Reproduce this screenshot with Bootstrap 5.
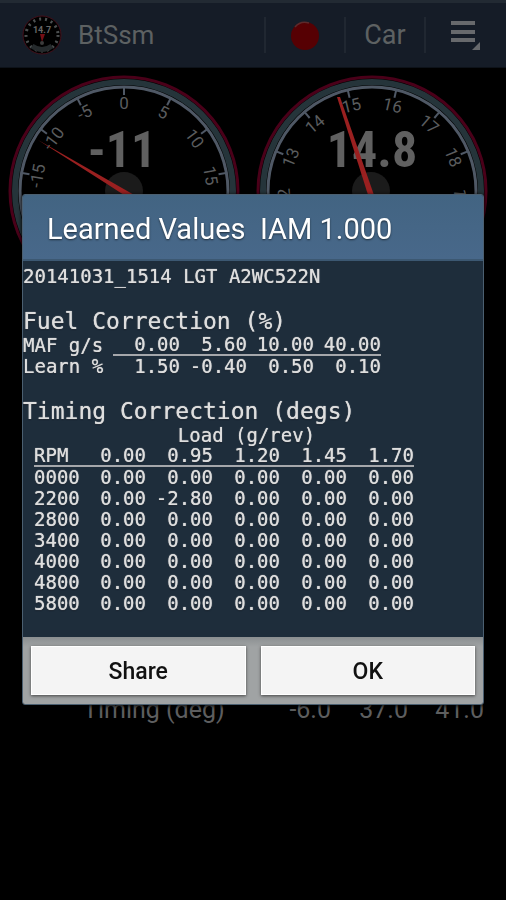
<!DOCTYPE html>
<html lang="en">
<head>
<meta charset="utf-8">
<meta name="viewport" content="width=device-width, initial-scale=1">
<title>BtSsm</title>
<link href="https://cdn.jsdelivr.net/npm/bootstrap@5.3.0/dist/css/bootstrap.min.css" rel="stylesheet">
<style>
body { background: #000; font-family: Roboto, sans-serif; color: #5d5e5f; }
.app-bar { height: 68px; background: #151c27; border-top: 3px solid #222a33; border-bottom: 1px solid #0d1219; padding: 0 2px 0 22px; }
.app-bar .app-name { font-size: 26px; line-height: 32px; color: #5d6162; }
.app-bar button { width: 80px; height: 36px; border: 0; border-left: 2px solid #202731; background: none; color: #5d6162; font-size: 27px; line-height: 32px; padding: 0; }
.gauges svg { width: 50%; height: auto; }
.scale-text { font: 17px Roboto, sans-serif; fill: #5a5c5e; text-anchor: middle; }
.big-value { font: bold 50px "Roboto Condensed", Roboto, sans-serif; fill: #606060; text-anchor: middle; }
.readings { margin-top: 374px; font-size: 25px; line-height: 30px; }
.readings table { width: 100%; }
.readings th { font-weight: 400; padding: 0 0 0 83px; }
.readings td { width: 77px; padding: 0; text-align: right; }
.readings td:last-child { width: 98px; padding-right: 22px; }
.overlay { padding: 0 22px 2px; }
.dialog-box { height: auto; border: 1px solid #4b5f70; border-radius: 3px; background: #1e2d3b; box-shadow: 0 1px 4px #000; overflow: hidden; }
.dialog-title { background: linear-gradient(#426482, #48688a); border-bottom: 2px solid #3c5872; color: #fff; font-size: 29px; line-height: 34px; padding: 17px 24px 13px; white-space: pre; text-shadow: 0 1px 2px #1e2d3b; }
.report { font-family: "DejaVu Sans Mono", monospace; font-size: 19px; line-height: 21px; color: #dedede; padding: 5px 0 23px; text-shadow: 0 0 1px #dedede, 0 1px 1px #0c1520; }
.report p, .report h2 { margin: 0; white-space: nowrap; }
.report h2 { font-size: 23px; line-height: 28px; font-weight: 400; margin-top: 20px; }
.report table { table-layout: fixed; border-collapse: separate; border-spacing: 0; }
.report th, .report td { font-weight: 400; padding: 0; height: 21px; text-align: right; white-space: nowrap; }
.report th[scope=row], .report .stub { text-align: left; }
.report .ruled { border-bottom: 2px solid #a5a7ab; line-height: 19px; }
.fuel { width: 358px; }
.fuel .first { width: 90px; }
.timing { width: 380px; margin-left: 11px; }
.timing .first { width: 45px; }
.report .load { text-align: center; }
.dialog-foot { background: linear-gradient(#8b8f91, #a0a3a4 10px); padding: 9px 8px; gap: 15px; }
.dialog-foot button { height: 49px; border: 1px solid #fff; background: #f4f4f4; color: #111; font-size: 23px; font-weight: 500; line-height: 28px; padding: 4px 0 0; box-shadow: 0 1px 3px #444; }
</style>
<script src="https://cdn.jsdelivr.net/npm/bootstrap@5.3.0/dist/js/bootstrap.bundle.min.js"></script>
</head>
<body>
<header class="app-bar d-flex align-items-center">
  <svg class="flex-shrink-0 me-3" width="40" height="40" viewBox="0 0 40 40" aria-hidden="true">
    <circle cx="20" cy="20" r="19" fill="#000" stroke="#44101a"/>
    <circle cx="20" cy="20" r="16" fill="none" stroke="#4c5051" stroke-width="3" stroke-dasharray="2 4"/>
    <path d="M10 31q10 7 20 0" fill="none" stroke="#252a2c" stroke-width="5"/>
    <text x="20" y="18" text-anchor="middle" font-family="Roboto" font-weight="700" font-size="9" fill="#666">14.7</text>
    <path d="M18 19l2 8 3-8z" fill="#750e15"/><circle cx="20" cy="28" r="2" fill="#3c3c3c"/>
  </svg>
  <span class="app-name me-auto">BtSsm</span>
  <button type="button" aria-label="Record"><svg width="30" height="30" viewBox="0 0 30 30"><circle cx="15" cy="15" r="14" fill="#560003"/><path d="M5 6a13 13 0 0 1 14-4" fill="none" stroke="#5c2a2c" stroke-width="1.5"/></svg></button>
  <button type="button">Car</button>
  <button type="button" aria-label="Menu"><svg width="32" height="32" viewBox="0 0 32 32" fill="#67696c"><path d="M2 1h24v4H2zM2 10h24v4H2zM2 18h24v4H2zM31 22v8h-8z"/></svg></button>
</header>
<main>
  <div class="gauges d-flex">
    <svg viewBox="0 0 253 253" role="img" aria-label="Timing gauge">
      <g fill="none">
        <circle cx="124" cy="123" r="114" stroke="#4a0019" stroke-width="3"/>
        <circle cx="124" cy="123" r="109" stroke="#25343a" stroke-width="6"/>
        <circle cx="124" cy="123" r="104" stroke="#4f5865" stroke-width="3"/>
        <g stroke="#4f5865" stroke-width="2">
          <path d="M124 18v9"/><path d="M124 18v9" transform="rotate(26.7 124 123)"/><path d="M124 18v9" transform="rotate(53.4 124 123)"/><path d="M124 18v9" transform="rotate(80 124 123)"/>
          <path d="M124 18v9" transform="rotate(-26.7 124 123)"/><path d="M124 18v9" transform="rotate(-53.4 124 123)"/><path d="M124 18v9" transform="rotate(-80 124 123)"/>
        </g>
      </g>
      <g class="scale-text">
        <text x="124" y="41">0</text><text x="124" y="41" transform="rotate(26.7 124 123)">5</text><text x="124" y="41" transform="rotate(53.4 124 123)">10</text><text x="124" y="41" transform="rotate(80 124 123)">15</text>
        <text x="124" y="41" transform="rotate(-26.7 124 123)">-5</text><text x="124" y="41" transform="rotate(-53.4 124 123)">-10</text><text x="124" y="41" transform="rotate(-80 124 123)">-15</text>
      </g>
      <circle cx="124" cy="123" r="19" fill="#1b1b1b"/>
      <text class="big-value" x="122" y="99">-11</text>
      <path d="M38 72L136 128L124 127L107 116z" fill="#9a2020"/>
    </svg>
    <svg viewBox="0 0 253 253" role="img" aria-label="Air fuel ratio gauge">
      <g fill="none">
        <circle cx="119" cy="123" r="114" stroke="#4a0019" stroke-width="3"/>
        <circle cx="119" cy="123" r="109" stroke="#25343a" stroke-width="6"/>
        <circle cx="119" cy="123" r="104" stroke="#4f5865" stroke-width="3"/>
        <g stroke="#4f5865" stroke-width="2">
          <path d="M119 18v9" transform="rotate(-67.5 119 123)"/><path d="M119 18v9" transform="rotate(-40.5 119 123)"/><path d="M119 18v9" transform="rotate(-13.5 119 123)"/>
          <path d="M119 18v9" transform="rotate(13.5 119 123)"/><path d="M119 18v9" transform="rotate(40.5 119 123)"/><path d="M119 18v9" transform="rotate(67.5 119 123)"/>
        </g>
      </g>
      <g class="scale-text">
        <text x="119" y="41" transform="rotate(-94.5 119 123)">12</text><text x="119" y="41" transform="rotate(-67.5 119 123)">13</text><text x="119" y="41" transform="rotate(-40.5 119 123)">14</text><text x="119" y="41" transform="rotate(-13.5 119 123)">15</text>
        <text x="119" y="41" transform="rotate(13.5 119 123)">16</text><text x="119" y="41" transform="rotate(40.5 119 123)">17</text><text x="119" y="41" transform="rotate(67.5 119 123)">18</text><text x="119" y="41" transform="rotate(94.5 119 123)">19</text>
      </g>
      <circle cx="118" cy="123" r="19" fill="#1b1b1b"/>
      <text class="big-value" x="119" y="99">14.8</text>
      <path d="M84 29L87 29L122 130L116 130z" fill="#9a2020"/>
    </svg>
  </div>
  <div class="readings">
    <table><tr><th scope="row">Timing (deg)</th><td>-6.0</td><td>37.0</td><td>41.0</td></tr></table>
  </div>
</main>
<div class="overlay position-fixed top-0 start-0 w-100 h-100 d-flex align-items-center">
  <section class="dialog-box w-100" role="dialog" aria-labelledby="dialog-title">
    <h1 class="dialog-title m-0 fw-normal" id="dialog-title">Learned Values  IAM 1.000</h1>
    <div class="report">
      <p>20141031_1514 LGT A2WC522N</p>
      <h2>Fuel Correction (%)</h2>
      <table class="fuel">
        <colgroup><col class="first"><col span="4"></colgroup>
        <tr><th scope="row">MAF g/s</th><th class="ruled">0.00</th><th class="ruled">5.60</th><th class="ruled">10.00</th><th class="ruled">40.00</th></tr>
        <tr><th scope="row">Learn %</th><td>1.50</td><td>-0.40</td><td>0.50</td><td>0.10</td></tr>
      </table>
      <h2>Timing Correction (degs)</h2>
      <table class="timing">
        <colgroup><col class="first"><col span="5"></colgroup>
        <tr><td></td><th class="load" colspan="5">Load (g/rev)</th></tr>
        <tr><th class="ruled stub">RPM</th><th class="ruled">0.00</th><th class="ruled">0.95</th><th class="ruled">1.20</th><th class="ruled">1.45</th><th class="ruled">1.70</th></tr>
        <tr><th scope="row">0000</th><td>0.00</td><td>0.00</td><td>0.00</td><td>0.00</td><td>0.00</td></tr>
        <tr><th scope="row">2200</th><td>0.00</td><td>-2.80</td><td>0.00</td><td>0.00</td><td>0.00</td></tr>
        <tr><th scope="row">2800</th><td>0.00</td><td>0.00</td><td>0.00</td><td>0.00</td><td>0.00</td></tr>
        <tr><th scope="row">3400</th><td>0.00</td><td>0.00</td><td>0.00</td><td>0.00</td><td>0.00</td></tr>
        <tr><th scope="row">4000</th><td>0.00</td><td>0.00</td><td>0.00</td><td>0.00</td><td>0.00</td></tr>
        <tr><th scope="row">4800</th><td>0.00</td><td>0.00</td><td>0.00</td><td>0.00</td><td>0.00</td></tr>
        <tr><th scope="row">5800</th><td>0.00</td><td>0.00</td><td>0.00</td><td>0.00</td><td>0.00</td></tr>
      </table>
    </div>
    <div class="dialog-foot d-flex">
      <button type="button" class="flex-fill w-50">Share</button>
      <button type="button" class="flex-fill w-50">OK</button>
    </div>
  </section>
</div>
</body>
</html>
